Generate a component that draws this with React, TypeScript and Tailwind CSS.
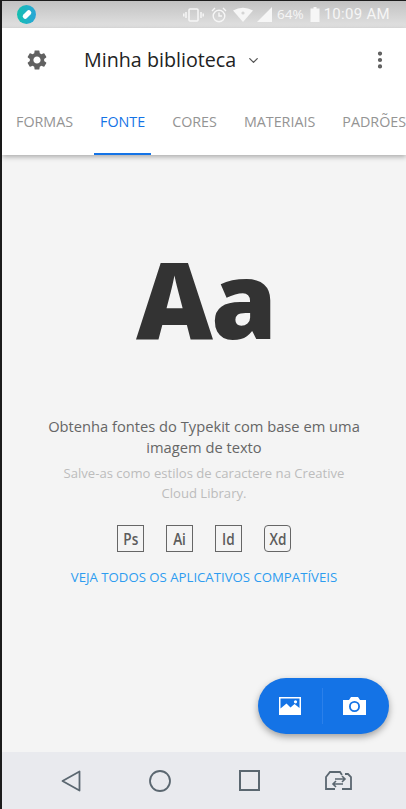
import { ChevronDown, EllipsisVertical } from "lucide-react";
import { MdSettings } from "react-icons/md";

const tabs = ["FORMAS", "FONTE", "CORES", "MATERIAIS", "PADRÕES"];
const apps = ["Ps", "Ai", "Id", "Xd"];

const StatusBar = () => (
  <div className="h-[27px] shrink-0 flex items-center pl-[15px] pr-[16px] bg-gradient-to-b from-[#c2c2c2] to-[#e2e2e2]">
    <div className="w-[19px] h-[19px] rounded-full bg-gradient-to-r from-[#14bfae] to-[#2aa5d8] flex items-center justify-center">
      <div className="w-[10px] h-[5px] rounded-full bg-white -rotate-45" />
    </div>
    <div className="ml-auto flex items-center text-[#f6f6f6]">
      <svg width="21" height="14" viewBox="0 0 21 14" fill="none" stroke="currentColor" strokeWidth="1.5">
        <rect x="6" y="1" width="9" height="12" rx="1" />
        <path d="M3 4v6M18 4v6M0.8 5.5v3M20.2 5.5v3" />
      </svg>
      <svg className="ml-[7px]" width="16" height="16" viewBox="0 0 16 16" fill="none" stroke="currentColor" strokeWidth="1.4">
        <circle cx="8" cy="9" r="5.8" />
        <path d="M8 5.5V9h3M1 4l3-3M15 4l-3-3" />
      </svg>
      <svg className="ml-[6px]" width="20" height="15" viewBox="0 0 20 15" fill="currentColor">
        <path d="M0 3.5 Q10 -2 20 3.5 L10 15Z" />
        <circle cx="10" cy="6" r="1.6" fill="#d4d4d4" />
      </svg>
      <svg className="ml-[4px]" width="15" height="15" viewBox="0 0 15 15" fill="currentColor">
        <path d="M15 0v15H0Z" />
      </svg>
      <span className="ml-[5px] text-[13.5px] font-['Open_Sans',sans-serif]">64%</span>
      <svg className="ml-[6px]" width="10" height="15" viewBox="0 0 10 15" fill="currentColor">
        <path d="M3.5 0h3v1.5H9.5V15H.5V1.5h3Z" />
      </svg>
      <span className="ml-[4px] text-[15px] tracking-[0.3px] font-['Roboto',sans-serif]">10:09 AM</span>
    </div>
  </div>
);

const Header = () => (
  <div className="relative z-10 shrink-0 bg-white shadow-[0_2px_5px_rgba(0,0,0,0.3)]">
    <div className="h-[64px] flex items-center pl-[23px] pr-[15px]">
      <MdSettings size={24} color="#616161" />
      <span className="ml-[35px] text-[19.7px] text-[#222] font-['Open_Sans',sans-serif]">Minha biblioteca</span>
      <ChevronDown className="ml-[10px]" size={15} stroke="#555" strokeWidth={2} />
      <EllipsisVertical className="ml-auto" size={22} stroke="#5c5c5c" strokeWidth={2.6} />
    </div>
    <div className="h-[63px] flex gap-[27px] pl-[14px] whitespace-nowrap overflow-hidden font-['Open_Sans',sans-serif] text-[14.3px]">
      {tabs.map((tab) => (
        <div
          key={tab}
          className={
            tab === "FONTE"
              ? "-mx-[6px] px-[6px] pt-[19px] text-[#1473e6] border-b-2 border-[#1473e6]"
              : "pt-[19px] text-[#949494]"
          }
        >
          {tab}
        </div>
      ))}
    </div>
  </div>
);

const Fab = () => (
  <div className="absolute right-[17px] bottom-[18px] w-[131px] h-[56px] rounded-full bg-[#1473e6] shadow-[0_3px_7px_rgba(0,0,0,0.35)] flex items-center">
    <div className="w-[64px] flex items-center justify-center">
      <svg width="22" height="18" viewBox="0 0 22 18">
        <path fill="#fff" d="M0 0h22v18H0Z" />
        <path fill="#1473e6" d="M1.5 1.5h19v9.5l-5-4-4 3.5-4-4-6 5Z" />
        <circle cx="16.5" cy="4.8" r="1.6" fill="#fff" />
      </svg>
    </div>
    <div className="w-px h-[36px] bg-[#2b80ea]" />
    <div className="flex-1 flex items-center justify-center pr-[3px]">
      <svg width="23" height="18" viewBox="0 0 23 18">
        <path fill="#fff" d="M0 3h6l2-3h7l2 3h6v15H0Z" />
        <circle cx="11.5" cy="9.5" r="4.6" fill="none" stroke="#1473e6" strokeWidth="1.8" />
      </svg>
    </div>
  </div>
);

const NavBar = () => (
  <div className="h-[57px] shrink-0 bg-[#e9eaee] flex items-center pl-[59px] text-[#5b6770]">
    <svg width="20" height="22" viewBox="0 0 20 22" fill="none" stroke="currentColor" strokeWidth="1.8" strokeLinejoin="round">
      <path d="M1.5 11 18.5 1.5v19Z" />
    </svg>
    <svg className="ml-[68px]" width="22" height="22" viewBox="0 0 22 22" fill="none" stroke="currentColor" strokeWidth="1.8">
      <circle cx="11" cy="11" r="10" />
    </svg>
    <svg className="ml-[68px]" width="21" height="21" viewBox="0 0 21 21" fill="none" stroke="currentColor" strokeWidth="2">
      <rect x="1" y="1" width="19" height="19" />
    </svg>
    <svg className="ml-[65px]" width="27" height="19" viewBox="0 0 27 19" fill="none" stroke="currentColor" strokeWidth="1.8">
      <path d="M10 18H1V6l4-5h10l2 3M17 18h9V6l-3-3h-3" />
      <path d="M8 13h10M11 10l-3 3 3 3M10 8h10M17 5l3 3-3 3" strokeWidth="1.6" />
    </svg>
  </div>
);

const App = () => {
  return (
    <div className="w-[406px] h-[809px] overflow-hidden bg-[#1c1c1c] pl-[2px] pt-px">
      <div className="h-full flex flex-col">
        <StatusBar />
        <Header />
        <div className="relative flex-1 bg-[#f4f4f4] flex flex-col items-center font-['Open_Sans',sans-serif]">
          <div className="mt-[80px] ml-[3px] h-[127px] text-[106px] leading-[127px] font-extrabold text-[#333] tracking-[-2px]">Aa</div>
          <p className="mt-[54px] w-[340px] text-center text-[14.7px] leading-[21px] text-[#666]">
            Obtenha fontes do Typekit com base em uma imagem de texto
          </p>
          <p className="mt-[5px] w-[300px] text-center text-[13.1px] leading-[20px] text-[#bcbcbc]">
            Salve-as como estilos de caractere na Creative Cloud Library.
          </p>
          <div className="mt-[22px] flex gap-[22px]">
            {apps.map((app) => (
              <div
                key={app}
                className={`w-[27px] h-[27px] border border-[#666] flex items-center justify-center text-[16px] font-semibold text-[#5c5c5c] ${app === "Xd" ? "rounded-[4px]" : ""}`}
              >
                <span className="scale-x-[0.85]">{app}</span>
              </div>
            ))}
          </div>
          <p className="mt-[16px] text-[13.2px] leading-[18px] text-[#2d9cf0]">VEJA TODOS OS APLICATIVOS COMPATÍVEIS</p>
          <Fab />
        </div>
        <NavBar />
      </div>
    </div>
  );
};

export default App;
